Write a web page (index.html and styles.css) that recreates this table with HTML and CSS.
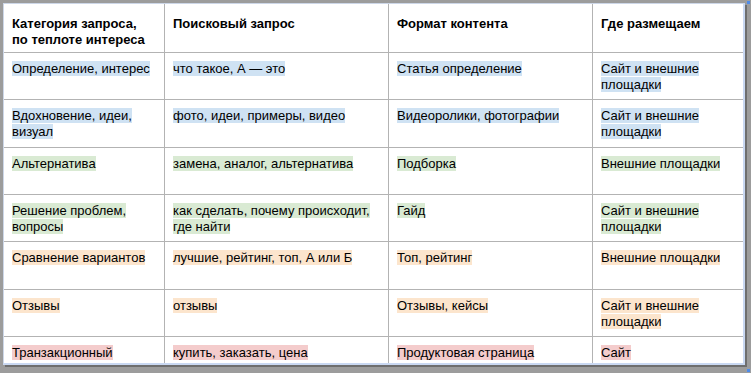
FILE: index.html
```html
<!DOCTYPE html>
<html lang="ru">
<head>
<meta charset="utf-8">
<title>Таблица запросов</title>
<link rel="stylesheet" href="styles.css">
</head>
<body>
<div class="frame">
  <table class="grid">
    <colgroup>
      <col class="c1"><col class="c2"><col class="c3"><col class="c4">
    </colgroup>
    <thead>
      <tr class="head">
        <th>Категория запроса,<br>по теплоте интереса</th>
        <th>Поисковый запрос</th>
        <th>Формат контента</th>
        <th>Где размещаем</th>
      </tr>
    </thead>
    <tbody>
      <tr>
        <td><span class="hl blue">Определение, интерес</span></td>
        <td><span class="hl blue">что такое, А — это</span></td>
        <td><span class="hl blue">Статья определение</span></td>
        <td><span class="hl blue">Сайт и внешние площадки</span></td>
      </tr>
      <tr>
        <td><span class="hl blue">Вдохновение, идеи, визуал</span></td>
        <td><span class="hl blue">фото, идеи, примеры, видео</span></td>
        <td><span class="hl blue">Видеоролики, фотографии</span></td>
        <td><span class="hl blue">Сайт и внешние площадки</span></td>
      </tr>
      <tr>
        <td><span class="hl green">Альтернатива</span></td>
        <td><span class="hl green">замена, аналог, альтернатива</span></td>
        <td><span class="hl green">Подборка</span></td>
        <td><span class="hl green">Внешние площадки</span></td>
      </tr>
      <tr>
        <td><span class="hl green">Решение проблем, вопросы</span></td>
        <td><span class="hl green">как сделать, почему происходит, где найти</span></td>
        <td><span class="hl green">Гайд</span></td>
        <td><span class="hl green">Сайт и внешние площадки</span></td>
      </tr>
      <tr>
        <td><span class="hl orange">Сравнение вариантов</span></td>
        <td><span class="hl orange">лучшие, рейтинг, топ, А или Б</span></td>
        <td><span class="hl orange">Топ, рейтинг</span></td>
        <td><span class="hl orange">Внешние площадки</span></td>
      </tr>
      <tr>
        <td><span class="hl orange">Отзывы</span></td>
        <td><span class="hl orange">отзывы</span></td>
        <td><span class="hl orange">Отзывы, кейсы</span></td>
        <td><span class="hl orange">Сайт и внешние площадки</span></td>
      </tr>
      <tr>
        <td><span class="hl red">Транзакционный</span></td>
        <td><span class="hl red">купить, заказать, цена</span></td>
        <td><span class="hl red">Продуктовая страница</span></td>
        <td><span class="hl red">Сайт</span></td>
      </tr>
    </tbody>
  </table>
</div>
<span class="handle handle-top"></span>
<span class="handle handle-bottom"></span>
</body>
</html>
```

FILE: styles.css
```css
html, body {
  margin: 0;
  padding: 0;
}

body {
  width: 751px;
  height: 373px;
  overflow: hidden;
  position: relative;
  background: #9c9c9c;
  font-family: "Liberation Sans", Arial, sans-serif;
  font-size: 13px;
  line-height: 16px;
  color: #000;
}

.frame {
  margin: 3px 0 0 3px;
  width: 739px;
  height: 359px;
  overflow: hidden;
  background: #fff;
  border-top: 1px solid #cdd7e8;
  border-left: 1px solid #cdd7e8;
  border-right: 2px solid #c9d8f2;
  border-bottom: 2px solid #c9d8f2;
  box-shadow: 2px 2px 0 #6e6e6e;
}

.grid {
  width: 739px;
  table-layout: fixed;
  border-collapse: separate;
  border-spacing: 0;
}

.c1 { width: 160px; }
.c2 { width: 224px; }
.c3 { width: 204px; }
.c4 { width: 151px; }

.grid th,
.grid td {
  text-align: left;
  vertical-align: top;
  padding: 8px 8px 0 8px;
  border-bottom: 1px solid #b3b3b3;
  border-left: 1px solid #b3b3b3;
}

.grid th:first-child,
.grid td:first-child {
  border-left: none;
}

.grid th {
  font-weight: bold;
  padding-top: 12px;
}

.grid tr {
  height: 47.33px;
}

.grid tr.head {
  height: 49px;
}

.hl {
  padding: 0;
}

.blue { background: #cfe2f3; }
.green { background: #d9ead3; }
.orange { background: #fce5cd; }
.red { background: #f4cccc; }

.handle {
  position: absolute;
  left: 747px;
  width: 3px;
  height: 3px;
  background: #4f8be8;
  box-shadow: 0 0 1px #9fc0f2;
}

.handle-top { top: 1px; }
.handle-bottom { top: 369px; }
```
